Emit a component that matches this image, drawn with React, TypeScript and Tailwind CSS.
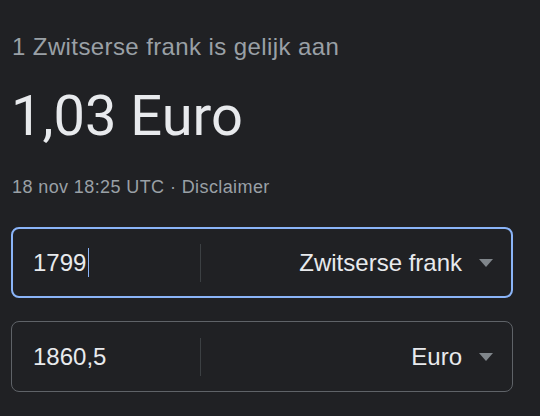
const rows = [
  { value: "1799", currency: "Zwitserse frank", focused: true },
  { value: "1860,5", currency: "Euro", focused: false },
];

function Caret() {
  return (
    <svg width="14" height="8" viewBox="0 0 14 8" className="shrink-0">
      <path d="M0 0h14L7 8z" fill="#80868b" />
    </svg>
  );
}

function ConverterRow({ value, currency, focused }: { value: string; currency: string; focused: boolean }) {
  return (
    <div
      className={
        "h-[71px] w-[502px] rounded-[8px] flex items-center " +
        (focused ? "border-2 border-[#8ab4f8]" : "border border-[#5f6368] px-px")
      }
    >
      <div className="w-[187px] h-full flex items-center pl-[20px] text-[24px] text-[#e8eaed]">
        <span>{value}</span>
        {focused && <span className="ml-[2px] w-px h-[29px] bg-[#8ab4f8]" />}
      </div>
      <div className="w-px h-[38px] bg-[#3c4043]" />
      <div className="flex-1 flex items-center justify-end gap-[17px] pr-[18px] text-[24px] text-[#e8eaed]">
        <span>{currency}</span>
        <Caret />
      </div>
    </div>
  );
}

export default function App() {
  return (
    <div className="w-[540px] h-[416px] bg-[#202124] pl-[11px] pt-[32px] font-['Liberation_Sans',Arial,sans-serif]">
      <div className="text-[24px] leading-[30px] tracking-[0.4px] text-[#9aa0a6] pl-px">1 Zwitserse frank is gelijk aan</div>
      <div className="mt-[22px] text-[56px] leading-[64px] text-[#e8eaed] font-['Roboto',sans-serif]">1,03 Euro</div>
      <div className="mt-[28px] text-[18px] leading-[22px] tracking-[0.4px] text-[#9aa0a6] pl-px">18 nov 18:25 UTC · Disclaimer</div>
      <div className="mt-[29px] flex flex-col gap-[23px]">
        {rows.map((row) => (
          <ConverterRow key={row.currency} {...row} />
        ))}
      </div>
    </div>
  );
}
